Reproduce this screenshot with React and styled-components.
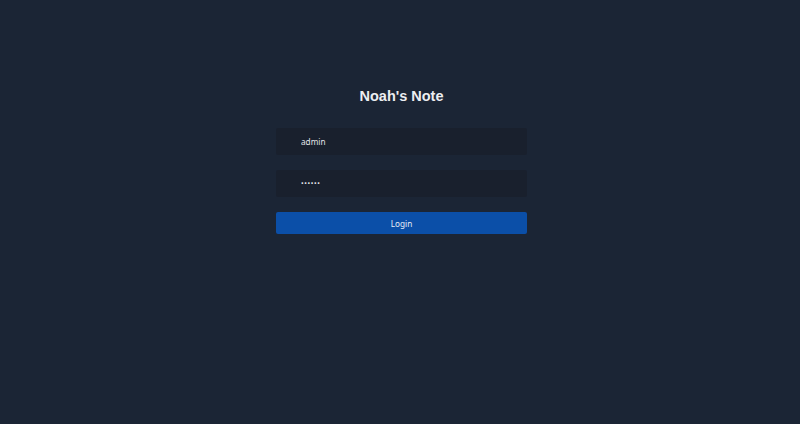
import React from 'react';
import styled, { createGlobalStyle } from 'styled-components';

const GlobalStyle = createGlobalStyle`
  html, body {
    margin: 0;
    padding: 0;
    background: #1b2535;
  }
  #root {
    min-height: 100vh;
  }
`;

const Page = styled.main`
  min-height: 100vh;
  background: #1b2535;
  padding-top: 88px;
  box-sizing: border-box;
`;

const LoginForm = styled.form`
  display: flex;
  flex-direction: column;
  width: 251px;
  margin-left: calc(50% - 124px);
`;

const Title = styled.h1`
  margin: 0 0 23px;
  font-family: 'Liberation Sans', Arial, sans-serif;
  font-size: 14.5px;
  line-height: 17px;
  font-weight: 700;
  text-align: center;
  color: #eceef1;
`;

const Field = styled.input`
  height: 27px;
  margin-bottom: 15px;
  padding: 0 0 0 25px;
  border: none;
  border-radius: 2px;
  outline: none;
  background: #19202d;
  color: #e2e5ea;
  font-family: 'Noto Sans', sans-serif;
  font-size: ${({ $secret }) => ($secret ? '7px' : '8.2px')};
  letter-spacing: ${({ $secret }) => ($secret ? '0.6px' : '0')};
  box-sizing: border-box;
`;

const LoginButton = styled.button`
  height: 22px;
  border: none;
  border-radius: 2px;
  background: #0b4fa8;
  color: #e8eef7;
  font-family: 'Noto Sans', sans-serif;
  font-size: 8.2px;
  cursor: pointer;
`;

const App = () => {
  return (
    <Page>
      <GlobalStyle />
      <LoginForm onSubmit={(e) => e.preventDefault()}>
        <Title>Noah's Note</Title>
        <Field type="text" defaultValue="admin" />
        <Field type="password" defaultValue="123456" $secret />
        <LoginButton type="submit">Login</LoginButton>
      </LoginForm>
    </Page>
  );
};

export default App;
